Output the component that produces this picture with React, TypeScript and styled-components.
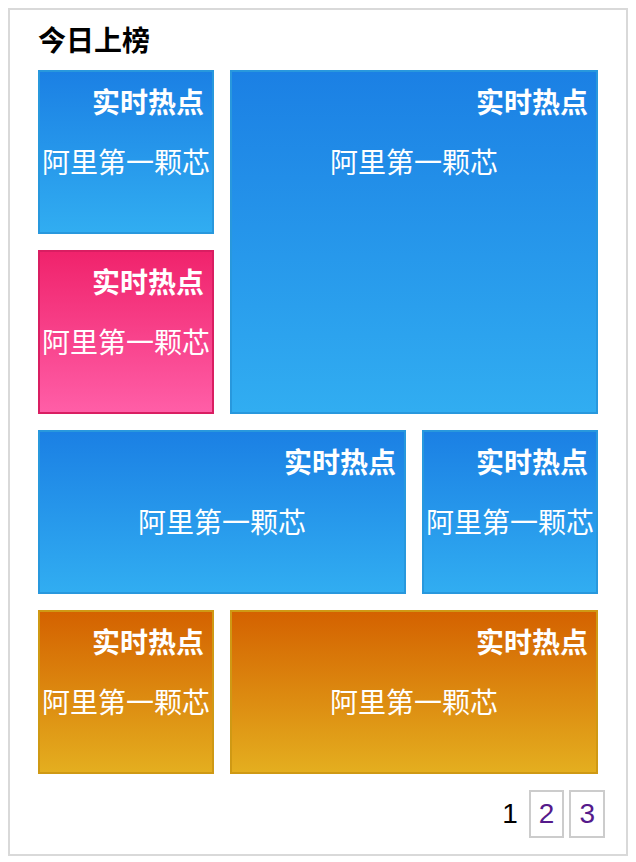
import React from "react";
import styled, { createGlobalStyle, css } from "styled-components";

const GlobalStyle = createGlobalStyle`
  html, body {
    margin: 0;
    padding: 0;
    background: #ffffff;
  }
  body {
    padding: 8px;
    font-family: "Liberation Sans", "Noto Sans CJK SC", sans-serif;
  }
`;

type Tone = "blue" | "pink" | "orange";

const tones: Record<Tone, { from: string; to: string; border: string }> = {
  blue: { from: "#1b80e4", to: "#31adf1", border: "#2898dd" },
  pink: { from: "#f0236c", to: "#ff5ea7", border: "#d91e62" },
  orange: { from: "#d46200", to: "#e4ae1f", border: "#cf9914" },
};

const Panel = styled.section`
  box-sizing: border-box;
  width: 620px;
  height: 848px;
  border: 2px solid #d9d9d9;
  padding: 16px 28px 0;
  display: flex;
  flex-direction: column;
`;

const Title = styled.h2`
  margin: 0 0 12px;
  font-size: 28px;
  line-height: 32px;
  font-weight: 700;
  color: #000;
`;

const Grid = styled.div`
  display: grid;
  grid-template-columns: repeat(3, 176px);
  grid-auto-rows: 164px;
  gap: 16px;
`;

const Tile = styled.div<{ $tone: Tone; $col?: string; $row?: string }>`
  box-sizing: border-box;
  display: flex;
  flex-direction: column;
  padding-top: 18px;
  ${({ $tone }) => css`
    border: 2px solid ${tones[$tone].border};
    background: linear-gradient(to bottom, ${tones[$tone].from}, ${tones[$tone].to});
  `}
  ${({ $col }) => $col && css`grid-column: ${$col};`}
  ${({ $row }) => $row && css`grid-row: ${$row};`}
  color: #fff;
  overflow: hidden;
`;

const Headline = styled.div`
  padding-right: 8px;
  text-align: right;
  font-size: 28px;
  line-height: 28px;
  font-weight: 700;
  white-space: nowrap;
`;

const Topic = styled.div`
  margin-top: 32px;
  text-align: center;
  font-size: 28px;
  line-height: 28px;
  font-weight: 400;
  white-space: nowrap;
`;

const Pager = styled.nav`
  display: flex;
  justify-content: flex-end;
  align-items: center;
  gap: 5px;
  margin: 16px -7px 0 0;
`;

const Current = styled.span`
  font-size: 28px;
  line-height: 32px;
  color: #000;
  margin-right: 6px;
`;

const PageLink = styled.a`
  box-sizing: border-box;
  display: block;
  border: 2px solid #cccccc;
  padding: 6px 8px;
  font-size: 28px;
  line-height: 32px;
  color: #551a8b;
  text-decoration: none;
`;

const tiles: { tone: Tone; col?: string; row?: string }[] = [
  { tone: "blue", col: "1", row: "1" },
  { tone: "blue", col: "2 / span 2", row: "1 / span 2" },
  { tone: "pink", col: "1", row: "2" },
  { tone: "blue", col: "1 / span 2", row: "3" },
  { tone: "blue", col: "3", row: "3" },
  { tone: "orange", col: "1", row: "4" },
  { tone: "orange", col: "2 / span 2", row: "4" },
];

export default function App() {
  return (
    <>
      <GlobalStyle />
      <Panel>
        <Title>今日上榜</Title>
        <Grid>
          {tiles.map((t, i) => (
            <Tile key={i} $tone={t.tone} $col={t.col} $row={t.row}>
              <Headline>实时热点</Headline>
              <Topic>阿里第一颗芯</Topic>
            </Tile>
          ))}
        </Grid>
        <Pager>
          <Current>1</Current>
          <PageLink href="#2">2</PageLink>
          <PageLink href="#3">3</PageLink>
        </Pager>
      </Panel>
    </>
  );
}
